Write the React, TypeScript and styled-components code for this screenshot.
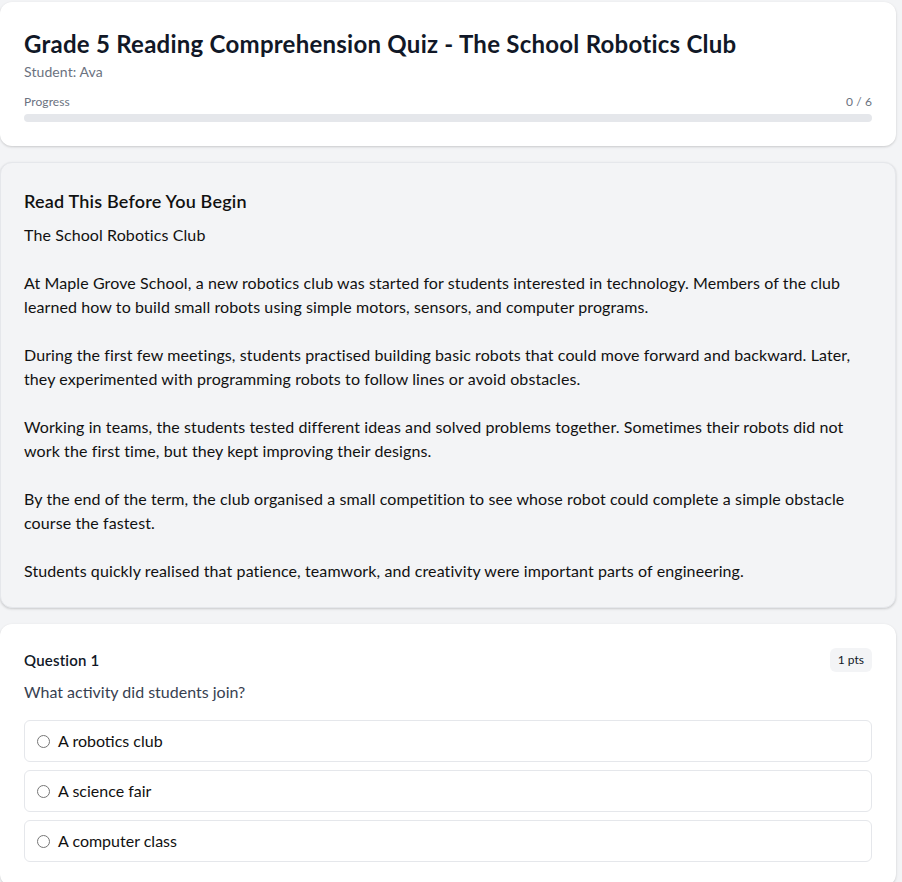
import React from "react";
import styled, { createGlobalStyle } from "styled-components";

const passage = `The School Robotics Club

At Maple Grove School, a new robotics club was started for students interested in technology. Members of the club learned how to build small robots using simple motors, sensors, and computer programs.

During the first few meetings, students practised building basic robots that could move forward and backward. Later, they experimented with programming robots to follow lines or avoid obstacles.

Working in teams, the students tested different ideas and solved problems together. Sometimes their robots did not work the first time, but they kept improving their designs.

By the end of the term, the club organised a small competition to see whose robot could complete a simple obstacle course the fastest.

Students quickly realised that patience, teamwork, and creativity were important parts of engineering.`;

const options = ["A robotics club", "A science fair", "A computer class"];

const App: React.FC = () => {
  const answered = 0;
  const total = 6;

  return (
    <>
      <GlobalStyle />
      <Page>
        <Card>
          <Title>Grade 5 Reading Comprehension Quiz - The School Robotics Club</Title>
          <Student>Student: Ava</Student>
          <ProgressRow>
            <span>Progress</span>
            <span>
              {answered} / {total}
            </span>
          </ProgressRow>
          <Track>
            <Fill style={{ width: `${(answered / total) * 100}%` }} />
          </Track>
        </Card>

        <PassageCard>
          <SectionTitle>Read This Before You Begin</SectionTitle>
          <PassageText>{passage}</PassageText>
        </PassageCard>

        <Card>
          <QuestionHeader>
            <QuestionLabel>Question 1</QuestionLabel>
            <Points>1 pts</Points>
          </QuestionHeader>
          <Prompt>What activity did students join?</Prompt>
          <OptionList>
            {options.map((opt) => (
              <Option key={opt}>
                <Radio type="radio" name="q1" value={opt} />
                {opt}
              </Option>
            ))}
          </OptionList>
        </Card>
      </Page>
    </>
  );
};

export default App;

const GlobalStyle = createGlobalStyle`
  body {
    margin: 0;
    background-color: #f3f4f6;
    font-family: "Segoe UI", Lato, "Noto Sans", sans-serif;
    color: #111827;
  }
`;

const Page = styled.div`
  display: flex;
  flex-direction: column;
  gap: 16px;
  padding: 2px 6px 24px 0;
`;

const Card = styled.div`
  background-color: #fff;
  border-radius: 12px;
  padding: 24px;
  box-shadow: 0 1px 3px rgba(0, 0, 0, 0.12), 0 1px 2px rgba(0, 0, 0, 0.06);
`;

const PassageCard = styled(Card)`
  background-color: #f3f4f6;
  border: 1px solid #e5e7eb;
  padding: 24px 23px 24px;
`;

const Title = styled.h1`
  margin: 0;
  padding-top: 2px;
  font-size: 24px;
  line-height: 32px;
  font-weight: 700;
  letter-spacing: 0.25px;
  color: #111827;
`;

const Student = styled.div`
  margin-top: 2px;
  font-size: 14px;
  line-height: 20px;
  letter-spacing: 0.1px;
  color: #6b7280;
`;

const ProgressRow = styled.div`
  display: flex;
  justify-content: space-between;
  margin-top: 12px;
  font-size: 12px;
  line-height: 16px;
  letter-spacing: 0.1px;
  color: #6b7280;
`;

const Track = styled.div`
  margin-top: 4px;
  height: 8px;
  border-radius: 9999px;
  background-color: #e5e7eb;
  overflow: hidden;
`;

const Fill = styled.div`
  height: 100%;
  background-color: #2563eb;
`;

const SectionTitle = styled.h2`
  margin: 0 0 8px;
  font-size: 18px;
  line-height: 28px;
  font-weight: 600;
  letter-spacing: 0.2px;
  color: #111;
`;

const PassageText = styled.div`
  white-space: pre-wrap;
  font-size: 16px;
  line-height: 24px;
  letter-spacing: 0.1px;
  color: #111;
`;

const QuestionHeader = styled.div`
  display: flex;
  justify-content: space-between;
  align-items: center;
`;

const QuestionLabel = styled.div`
  font-size: 15px;
  line-height: 20px;
  font-weight: 600;
  letter-spacing: 0.2px;
  color: #111827;
`;

const Points = styled.span`
  font-size: 12px;
  line-height: 16px;
  padding: 4px 8px;
  border-radius: 6px;
  background-color: #f3f4f6;
  color: #111827;
`;

const Prompt = styled.p`
  margin: 8px 0 0;
  font-size: 16px;
  line-height: 24px;
  color: #374151;
`;

const OptionList = styled.div`
  display: flex;
  flex-direction: column;
  gap: 8px;
  margin-top: 16px;
`;

const Option = styled.label`
  display: flex;
  align-items: center;
  gap: 8px;
  padding: 8px 12px;
  border: 1px solid #e5e7eb;
  border-radius: 6px;
  font-size: 16px;
  line-height: 24px;
  color: #111;
  cursor: pointer;
`;

const Radio = styled.input`
  margin: 0;
  width: 13px;
  height: 13px;
`;
